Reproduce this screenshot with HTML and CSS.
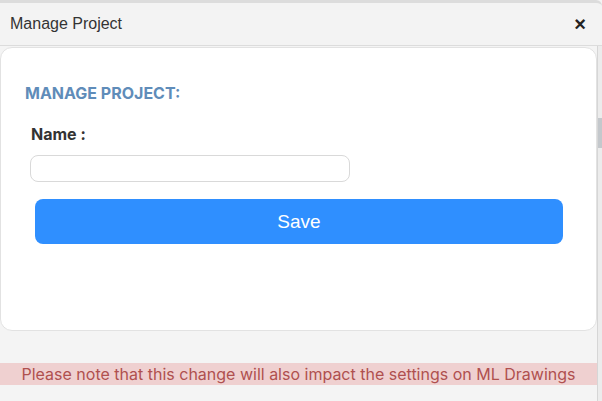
FILE: index.html
```html
<!DOCTYPE html>
<html lang="en">
<head>
<meta charset="UTF-8">
<meta name="viewport" content="width=device-width, initial-scale=1.0">
<title>Manage Project</title>
<link rel="stylesheet" href="styles.css">
</head>
<body>
<div class="modal-header">
    <span class="modal-title">Manage Project</span>
    <span class="close">&times;</span>
</div>
<div class="modal-main">
    <div class="modal-content">
        <div class="card">
            <h3 class="card-title">MANAGE PROJECT:</h3>
            <form id="projectForm">
                <label for="projectName" class="field-label">Name :</label>
                <input type="text" id="projectName" name="projectName" class="field-input">
                <button type="submit" class="save-btn">Save</button>
            </form>
        </div>
        <div class="note">Please note that this change will also impact the settings on ML Drawings</div>
    </div>
    <div class="scroll-strip"><div class="thumb"></div></div>
</div>
</body>
</html>
```

FILE: styles.css
```css
body {
    margin: 0;
    background-color: #f4f4f4;
    font-family: Inter, "Liberation Sans", Arial, sans-serif;
    height: 401px;
    overflow: hidden;
}
.modal-header {
    height: 42px;
    border-top: 3px solid #dcdcdc;
    border-bottom: 1px solid #dcdcdc;
    border-top-right-radius: 6px;
    background-color: #f3f3f3;
    display: flex;
    align-items: center;
    justify-content: space-between;
    padding: 0 16px 0 10px;
}
.modal-title {
    font-family: "Liberation Sans", Arial, sans-serif;
    font-size: 16px;
    color: #333;
}
.close {
    font-family: "Liberation Sans", Arial, sans-serif;
    font-size: 20px;
    font-weight: bold;
    color: #222;
    cursor: pointer;
}
.modal-main {
    display: flex;
    height: 355px;
}
.modal-content {
    flex: 1;
    padding-top: 1px;
}
.card {
    height: 284px;
    background-color: #fff;
    border: 1px solid #e2e2e2;
    border-radius: 12px;
    padding: 0 33px 0 23px;
    box-sizing: border-box;
}
.card-title {
    margin: 35px 0 0 1px;
    font-size: 16px;
    font-weight: 700;
    color: #5f8cb9;
}
.field-label {
    display: block;
    margin: 21px 0 0 7px;
    font-size: 16px;
    font-weight: 700;
    color: #333;
}
.field-input {
    display: block;
    width: 320px;
    height: 27px;
    margin: 11px 0 0 6px;
    border: 1px solid #d9d9d9;
    border-radius: 8px;
    box-sizing: border-box;
}
.save-btn {
    display: block;
    width: 528px;
    height: 45px;
    margin: 17px 0 0 11px;
    background-color: #2f8fff;
    color: #fff;
    border: none;
    border-radius: 8px;
    font-family: "Liberation Sans", Arial, sans-serif;
    font-size: 19px;
    cursor: pointer;
}
.note {
    margin-top: 32px;
    height: 22px;
    line-height: 22px;
    background-color: #efd0d0;
    color: #b0504f;
    text-align: center;
    font-size: 16px;
}
.scroll-strip {
    width: 4px;
    border-left: 1px solid #d6d6d6;
    background-color: #ececec;
    padding-top: 72px;
}
.thumb {
    height: 30px;
    background-color: #c4c8cc;
}
```
